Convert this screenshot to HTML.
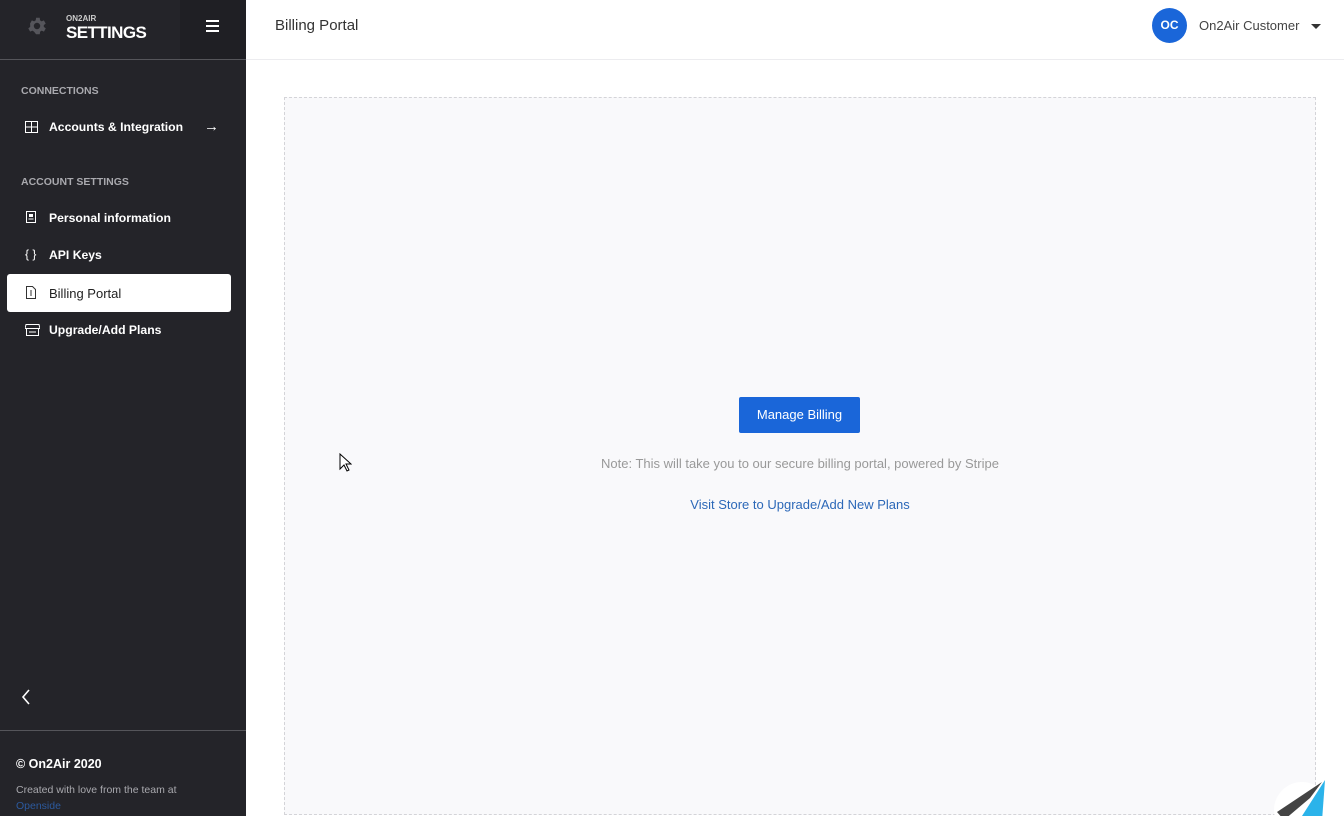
<!DOCTYPE html>
<html><head><style>
*{box-sizing:border-box;margin:0;padding:0}
html,body{width:1344px;height:816px;overflow:hidden}
body{font-family:"Liberation Sans",sans-serif;background:#fff;position:relative}
.sb{position:absolute;left:0;top:0;width:246px;height:816px;background:#242429;color:#fff}
.top{height:60px;border-bottom:1px solid #55555a;position:relative}
.ham{position:absolute;left:180px;top:0;width:66px;height:59px;background:#1f1f24}
.sec{position:absolute;left:21px;font-size:10.5px;font-weight:bold;color:#a9a9ae}
.it{position:absolute;left:49px;font-size:12.2px;font-weight:bold;color:#fff}
.ic{position:absolute;left:25px}
.act{position:absolute;left:7px;top:274px;width:224px;height:38px;background:#fff;border-radius:3px}
.main{position:absolute;left:246px;top:0;width:1098px;height:816px;overflow:hidden}
.hdr{height:60px;border-bottom:1px solid #ececef;position:relative}
.box{position:absolute;left:38px;top:97px;width:1032px;height:718px;border:1px dashed #d4d4d8;background:#f9f9fb}
</style></head><body>
<div class="sb">
 <div class="top">
  <svg style="position:absolute;left:26px;top:15px" width="22" height="22" viewBox="0 0 24 24"><path fill="#55555b" d="M19.4 13a7.5 7.5 0 000-2l2.1-1.6-2-3.5-2.5 1a7 7 0 00-1.7-1L15 3h-4l-.4 2.9a7 7 0 00-1.7 1l-2.5-1-2 3.5L4.6 11a7.5 7.5 0 000 2l-2.1 1.6 2 3.5 2.5-1a7 7 0 001.7 1L11 21h4l.4-2.9a7 7 0 001.7-1l2.5 1 2-3.5zM12 15.5a3.5 3.5 0 110-7 3.5 3.5 0 010 7z"/></svg>
  <div style="position:absolute;left:66px;top:14px;font-size:8px;font-weight:bold;color:#ccc">ON2AIR</div>
  <div style="position:absolute;left:66px;top:23px;font-size:17px;font-weight:bold;letter-spacing:-0.6px">SETTINGS</div>
  <div class="ham"><div style="position:absolute;left:26px;top:20px;width:13px;height:2px;background:#fff;box-shadow:0 5px 0 #fff,0 10px 0 #fff"></div></div>
 </div>
 <div class="sec" style="top:85px">CONNECTIONS</div>
 <svg class="ic" style="top:121px" width="13" height="12"><rect x=".5" y=".5" width="12" height="11" fill="none" stroke="#fff"/><path d="M6.5 0v12M0 6h13" stroke="#fff"/></svg>
 <div class="it" style="top:120px">Accounts &amp; Integration</div>
 <div style="position:absolute;left:204px;top:118px;font-size:15px">→</div>
 <div class="sec" style="top:176px">ACCOUNT SETTINGS</div>
 <svg class="ic" style="top:211px;left:26px" width="10" height="12"><rect x=".5" y=".5" width="9" height="11" fill="none" stroke="#fff"/><rect x="3" y="3" width="4" height="3" fill="#fff"/><path d="M2.5 8h5" stroke="#fff"/></svg>
 <div class="it" style="top:211px">Personal information</div>
 <div style="position:absolute;left:25px;top:247px;font-size:12px">{ }</div>
 <div class="it" style="top:248px">API Keys</div>
 <div class="act"></div>
 <svg class="ic" style="top:286px;left:26px" width="10" height="13"><path d="M.5.5h6l3 3v9h-9z" fill="none" stroke="#333"/><path d="M5 4v6" stroke="#333"/></svg>
 <div class="it" style="top:286px;color:#222;font-weight:normal;font-size:13px">Billing Portal</div>
 <svg class="ic" style="top:324px" width="15" height="12"><path d="M1 .5h13l1 4H0zM1.5 4.5v7h12v-7M4 8h7" fill="none" stroke="#fff"/></svg>
 <div class="it" style="top:323px">Upgrade/Add Plans</div>
 <svg style="position:absolute;left:21px;top:689px" width="10" height="16"><path d="M8 1L2 8l6 7" fill="none" stroke="#fff" stroke-width="1.6"/></svg>
 <div style="position:absolute;left:0;top:730px;width:246px;border-top:1px solid #55555a"></div>
 <div style="position:absolute;left:16px;top:757px;font-size:12.5px;font-weight:bold">© On2Air 2020</div>
 <div style="position:absolute;left:16px;top:784px;font-size:10.5px;color:#a9a9ae">Created with love from the team at</div>
 <div style="position:absolute;left:16px;top:800px;font-size:10.5px;color:#2c5a9e">Openside</div>
</div>
<div class="main">
 <div class="hdr">
  <div style="position:absolute;left:29px;top:17px;font-size:15px;color:#333">Billing Portal</div>
  <div style="position:absolute;left:906px;top:8px;width:35px;height:35px;border-radius:50%;background:#1a66d9;color:#fff;font-size:12px;font-weight:bold;text-align:center;line-height:35px">OC</div>
  <div style="position:absolute;left:953px;top:18px;font-size:13px;color:#444">On2Air Customer</div>
  <div style="position:absolute;left:1065px;top:24px;border:5px solid transparent;border-top:5px solid #333;border-bottom:0"></div>
 </div>
 <div class="box">
  <div style="position:absolute;left:454px;top:299px;width:121px;height:36px;background:#1a66d9;border-radius:2px;color:#fff;font-size:13px;text-align:center;line-height:36px">Manage Billing</div>
  <div style="position:absolute;left:0;width:100%;top:358px;text-align:center;font-size:13px;color:#999">Note: This will take you to our secure billing portal, powered by Stripe</div>
  <div style="position:absolute;left:0;width:100%;top:399px;text-align:center;font-size:13px;color:#2c68b8">Visit Store to Upgrade/Add New Plans</div>
 </div>
 <svg style="position:absolute;left:1026px;top:776px" width="60" height="50"><circle cx="30" cy="34" r="28" fill="#fff"/><path d="M5 36L50 6 38 22 12 44z" fill="#444"/><path d="M53 4L50 45 30 40z" fill="#2bb3ea"/></svg>
 <svg style="position:absolute;left:93px;top:453px" width="13" height="20"><path d="M1 1v15l4-4 3 6 2-1-3-6h5z" fill="#fff" stroke="#000"/></svg>
</div>
</body></html>
